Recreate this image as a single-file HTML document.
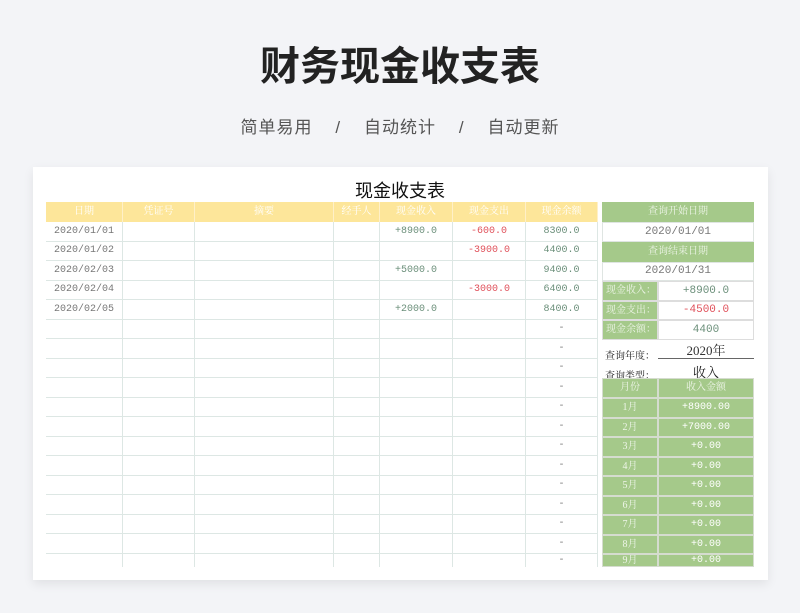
<!DOCTYPE html>
<html><head><meta charset="utf-8"><style>
*{margin:0;padding:0;box-sizing:border-box}
body{width:800px;height:613px;background:#f3f4f7;position:relative;overflow:hidden;font-family:"Liberation Serif","Noto Serif CJK SC",serif}
.a{position:absolute}
.t{left:0;width:800px;text-align:center;font-family:"Liberation Sans","Noto Sans CJK SC",sans-serif}
.card{left:33px;top:167px;width:735px;height:413px;background:#fff;box-shadow:0 4px 10px rgba(0,0,0,.08)}
.c{position:absolute;display:flex;align-items:center;justify-content:center;font-size:10px;color:#777;line-height:1}
.n{font-family:"Liberation Mono","Noto Serif CJK SC",monospace;font-size:10px}
.hy{background:#fde69a;color:#fff}
.g{background:#a5c98a;color:#eef5e8}
.r{color:#e0505a}
.gr{color:#6b8f7a}
</style></head><body>
<div class="a t" style="top:34px;font-size:40px;font-weight:bold;color:#222;letter-spacing:0px">财务现金收支表</div>
<div class="a t" style="top:113px;font-size:17px;color:#555;letter-spacing:1px">简单易用&nbsp;&nbsp;&nbsp;&nbsp;/&nbsp;&nbsp;&nbsp;&nbsp;自动统计&nbsp;&nbsp;&nbsp;&nbsp;/&nbsp;&nbsp;&nbsp;&nbsp;自动更新</div>
<div class="a card"></div>
<div class="a t" style="top:177px;font-size:18px;color:#111">现金收支表</div>
<div id="L"></div>
<script>
var cols=[46,123,195,334,380,453,526,598];
var heads=["日期","凭证号","摘要","经手人","现金收入","现金支出","现金余额"];
var data=[["2020/01/01","","","","+8900.0","-600.0","8300.0"],["2020/01/02","","","","","-3900.0","4400.0"],["2020/02/03","","","","+5000.0","","9400.0"],["2020/02/04","","","","","-3000.0","6400.0"],["2020/02/05","","","","+2000.0","","8400.0"]];
var h='';
var R=Math.round;
for(var i=0;i<7;i++){h+='<div class="c hy" style="left:'+cols[i]+'px;top:202px;width:'+(cols[i+1]-cols[i])+'px;height:20px;border-right:1px solid #fff0c8">'+heads[i]+'</div>';}
for(var r=0;r<18;r++){var y=R(222+r*19.5),y2=(r==17)?567:R(222+(r+1)*19.5);
 for(var i=0;i<7;i++){var v='',cl='n';if(r<5){v=data[r][i];if(i==4)cl+=' gr';if(i==5)cl+=' r';if(i==6)cl+=' gr';}else if(i==6)v='-';
 h+='<div class="c '+cl+'" style="left:'+cols[i]+'px;top:'+y+'px;width:'+(cols[i+1]-cols[i])+'px;height:'+(y2-y)+'px;border-right:1px solid #dde7e4;border-bottom:'+(r==17?0:1)+'px solid #dde7e4">'+v+'</div>';}}
function box(x,y,w,hh,cls,txt,st){h+='<div class="c '+cls+'" style="left:'+x+'px;top:'+y+'px;width:'+w+'px;height:'+hh+'px;'+(st||'')+'">'+txt+'</div>';}
box(602,202,152,20,'g','查询开始日期');
box(602,222,152,20,'n','2020/01/01','border:1px solid #dfe5e2;font-size:11px');
box(602,242,152,20,'g','查询结束日期');
box(602,262,152,19,'n','2020/01/31','border:1px solid #dfe5e2;font-size:11px');
var lab=[["现金收入：","+8900.0","gr"],["现金支出：","-4500.0","r"],["现金余额：","4400","gr"]];
for(var k=0;k<3;k++){var y=R(281+k*19.5),y2=R(281+(k+1)*19.5);box(602,y,56,y2-y,'g',lab[k][0],'border:1px solid #ddd;justify-content:flex-start;padding-left:3px');box(658,y,96,y2-y,'n '+lab[k][2],lab[k][1],'border:1px solid #ddd;font-size:11px');}
h+='<div class="a" style="left:605px;top:347px;font-size:10px;color:#222">查询年度：</div>';
h+='<div class="a" style="left:658px;top:344px;width:96px;text-align:center;font-size:13px;color:#333;border-bottom:1px solid #666;height:15px;line-height:14px">2020年</div>';
h+='<div class="a" style="left:605px;top:367px;font-size:10px;color:#222">查询类型：</div>';
h+='<div class="a" style="left:658px;top:362px;width:96px;text-align:center;font-size:13px;color:#222">收入</div>';
box(602,378,56,20,'g','月份','border:1px solid #d5dccf');box(658,378,96,20,'g','收入金额','border:1px solid #d5dccf');
var m=["+8900.00","+7000.00","+0.00","+0.00","+0.00","+0.00","+0.00","+0.00","+0.00"];
for(var k=0;k<9;k++){var y=R(398+k*19.5),y2=(k==8)?567:R(398+(k+1)*19.5);box(602,y,56,y2-y,'g',(k+1)+'月','border:1px solid #d5dccf;overflow:hidden');box(658,y,96,y2-y,'g n',m[k],'border:1px solid #d5dccf;color:#fff;overflow:hidden');}
document.getElementById('L').innerHTML=h;
</script>
</body></html>
